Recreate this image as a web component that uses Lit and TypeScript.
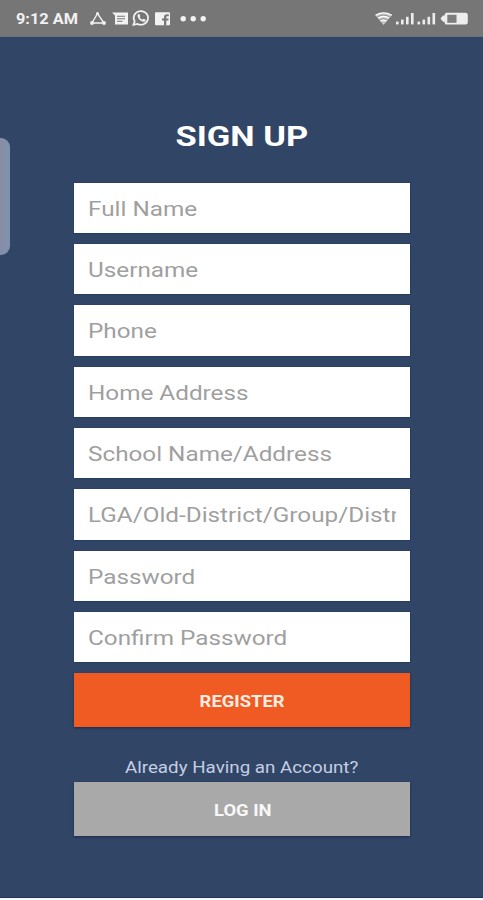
import { LitElement, html, css, svg } from "lit";
import { customElement } from "lit/decorators.js";

const FIELDS = [
  "Full Name",
  "Username",
  "Phone",
  "Home Address",
  "School Name/Address",
  "LGA/Old-District/Group/District",
  "Password",
  "Confirm Password",
];

const bars = (x: number) => svg`
  <rect x=${x} y="21.6" width="2.6" height="2.8"/>
  <rect x=${x + 5} y="19.6" width="2.6" height="4.8"/>
  <rect x=${x + 10} y="16.8" width="2.6" height="7.6"/>
  <rect x=${x + 15} y="13" width="2.6" height="11.4"/>`;

@customElement("status-bar")
class StatusBar extends LitElement {
  static styles = css`
    :host {
      display: flex;
      justify-content: space-between;
      height: 37px;
      box-sizing: border-box;
      background: #767676;
      border-bottom: 1px solid #69717c;
      color: #f2f2f2;
    }
    .left { display: flex; padding-left: 16px; }
    .time {
      width: 72px;
      font: 700 14px/38px Roboto, sans-serif;
      white-space: nowrap;
      transform: scaleX(1.165);
      transform-origin: 0 0;
    }
    svg { display: block; }
  `;
  render() {
    return html`
      <div class="left">
        <span class="time">9:12 AM</span>
        <svg width="122" height="36" viewBox="88 0 122 36" fill="#f2f2f2">
          <path d="M97.5 13.5L92 23H104Z" fill="none" stroke="#f2f2f2" stroke-width="1.4"/>
          <circle cx="97.5" cy="13.6" r="1.5"/><circle cx="92" cy="23" r="1.9"/><circle cx="104" cy="23" r="1.9"/>
          <path d="M112 12.5h16v12h-13v-9z"/>
          <path d="M117 16.3h8M117 18.8h8M117 21.3h5.5" stroke="#777" stroke-width="1.1"/>
          <path d="M133.4 24.8l1.3-3.4a7.2 6.8 0 1 1 2.8 2.5z" fill="none" stroke="#f2f2f2" stroke-width="1.7"/>
          <path d="M138 14.2l1.3-.2 1.1 2.2-.8 1.1c.7 1.2 1.6 1.9 2.8 2.4l1-1 2.2 1.1-.1 1.2c-1.2 1.3-3 .8-4.9-.5-2.2-1.5-3.8-4.5-2.6-6.3z"/>
          <rect x="155" y="12.3" width="15" height="13" rx="1"/>
          <path d="M164 25.5v-5h-2v-1.9h2v-1.4c0-2 1.1-2.9 3.1-2.9h1.7v1.9h-1.2c-.9 0-1.3.3-1.3 1.1v1.3h2.4l-.4 1.9h-2v5z" fill="#777"/>
          <circle cx="183.2" cy="18.8" r="2.7"/><circle cx="193.2" cy="18.8" r="2.7"/><circle cx="203.2" cy="18.8" r="2.7"/>
        </svg>
      </div>
      <svg width="108" height="36" viewBox="375 0 108 36" fill="#ededed">
        <path d="M375.5 15.2C380 12.2 387.5 12.2 391.8 15.2L383.5 25Z" fill="#c9c9c9"/>
        <path d="M375.5 15.2q8-4.6 16.3 0M378.2 18q5.3-3.2 10.8 0M380.6 21q3-1.9 6 0" fill="none" stroke="#fff" stroke-width="1.3"/>
        <path d="M377.5 16.8q6-3.4 12.2 0M380 19.7q3.5-2.1 7.3 0" fill="none" stroke="#858585" stroke-width=".8"/>
        ${bars(396)}${bars(417.5)}
        <path d="M440.5 18.4l2.5-3h1.8a2 2 0 0 1 2-2.6h18.7a2.3 2.3 0 0 1 2.3 2.3v7.2a2.3 2.3 0 0 1-2.3 2.3h-18.7a2 2 0 0 1-2-2.9h-1.8z"/>
        <rect x="447.3" y="14.8" width="9.2" height="8" fill="#7d7d7d"/>
      </svg>`;
  }
}

@customElement("app-root")
class AppRoot extends LitElement {
  static styles = css`
    :host {
      display: flex;
      flex-direction: column;
      position: relative;
      height: 900px;
      overflow: hidden;
      background: #f4f7fc;
      font-family: Roboto, sans-serif;
    }
    main {
      display: flex;
      flex-direction: column;
      align-items: center;
      height: 860.5px;
      box-sizing: border-box;
      padding-top: 80px;
      background: #314567;
      border-bottom: 1px solid #243456;
    }
    h1 {
      margin: 0;
      height: 65.5px;
      font-size: 28.5px;
      line-height: 39px;
      font-weight: 700;
      color: #fff;
      white-space: nowrap;
      transform: scaleX(1.21);
    }
    form {
      display: flex;
      flex-direction: column;
      width: 336px;
      gap: 10.85px;
    }
    .field {
      height: 50.5px;
      box-sizing: border-box;
      padding: 0 13.5px;
      background: #fff;
      box-shadow: 0 0 1.5px 0.5px #16305c;
    }
    .clip { overflow: hidden; height: 100%; padding-left: 0.8px; }
    .hint {
      display: block;
      width: max-content;
      font-size: 20px;
      line-height: 52px;
      color: #9f9f9f;
      transform: scaleX(1.214);
      transform-origin: 0 0;
    }
    .button {
      height: 54px;
      display: flex;
      align-items: center;
      justify-content: center;
      font-size: 16.5px;
      font-weight: 700;
      color: #f8f8f8;
      box-shadow: 0 1px 2px rgba(15, 25, 50, 0.6);
    }
    .button span { transform: scaleX(1.115); margin: 3px 0 0 2px; }
    .register { background: #f05a23; color: #ffede3; margin-top: -0.5px; }
    .login { width: 336px; background: #a9a9a9; }
    .prompt {
      margin: 29px 0 0 1px;
      height: 26px;
      font-size: 16.5px;
      line-height: 23px;
      color: #c3cee2;
      white-space: nowrap;
      transform: scaleX(1.137);
    }
    .handle {
      position: absolute;
      left: 0;
      top: 138px;
      width: 9.5px;
      height: 117px;
      border-radius: 0 9px 9px 0;
      background: linear-gradient(90deg, #8b8ba5, #8190ab 45%);
    }
  `;
  render() {
    return html`
      <status-bar></status-bar>
      <main>
        <h1>SIGN UP</h1>
        <form>
          ${FIELDS.map((f) => html`<div class="field"><div class="clip"><span class="hint">${f}</span></div></div>`)}
          <div class="button register"><span>REGISTER</span></div>
        </form>
        <p class="prompt">Already Having an Account?</p>
        <div class="button login"><span>LOG IN</span></div>
      </main>
      <div class="handle"></div>`;
  }
}
